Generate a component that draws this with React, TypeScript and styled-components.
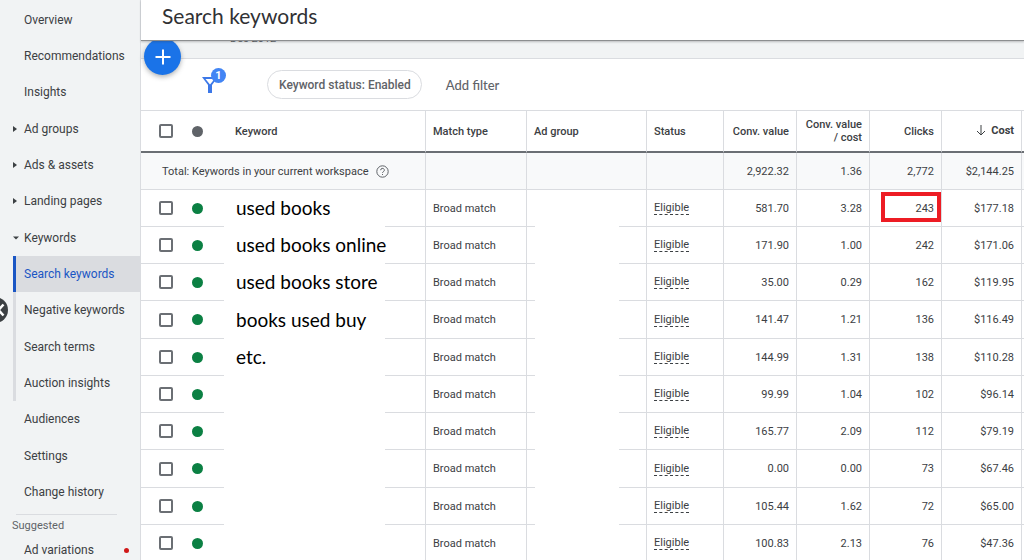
import React from 'react';
import styled, { createGlobalStyle, css } from 'styled-components';

const GlobalStyle = createGlobalStyle`
  * { box-sizing: border-box; }
  body { margin: 0; background: #fff; font-family: Roboto, "Liberation Sans", sans-serif; color: #3c4043; }
  button { font: inherit; color: inherit; border: 0; background: none; padding: 0; cursor: pointer; }
`;

const Shell = styled.div`
  display: flex;
  height: 100vh;
  overflow: hidden;
`;

const Sidebar = styled.nav`
  position: relative;
  flex: 0 0 141px;
  background: #f1f3f4;
  border-right: 1px solid #dadce0;
  padding-top: 2px;
  overflow: hidden;
`;

const NavList = styled.ul`
  list-style: none;
  margin: 0;
  padding: 0;
`;

const NavItem = styled.li`
  height: 36px;
  padding-left: 13px;
  &:nth-child(3n) { height: 37px; }
`;

const NavLink = styled.a<{ $nested?: boolean; $active?: boolean }>`
  display: flex;
  align-items: center;
  height: 100%;
  padding-bottom: 1px;
  font-size: 12px;
  white-space: nowrap;
  color: ${p => (p.$active ? '#1a56c4' : '#3c4043')};
  text-decoration: none;
  border-left: ${p => (p.$nested ? '3px' : '0')} solid ${p => (p.$active ? '#1a56c4' : '#dadce0')};
  padding-left: ${p => (p.$nested ? '8px' : '0')};
  background: ${p => (p.$active ? '#dadce0' : 'transparent')};
`;

const Marker = styled.span`
  display: flex;
  flex: 0 0 11px;
`;

const Suggested = styled.section`
  margin: 4px 0 0 12px;
`;

const SuggestedTitle = styled.h2`
  margin: 0;
  font-size: 11px;
  line-height: 21px;
  font-weight: 400;
  color: #5f6368;
`;

const Divider = styled.hr`
  margin: 0 23px 0 4px;
  border: 0;
  border-top: 1px solid #dadce0;
`;

const SuggestedLink = styled.a`
  display: flex;
  align-items: center;
  justify-content: space-between;
  padding: 0 11px 0 12px;
  height: 28px;
  font-size: 12px;
  color: #3c4043;
  text-decoration: none;
`;

const RedDot = styled.i`
  width: 5px;
  height: 5px;
  border-radius: 50%;
  background: #d01818;
`;

const CollapseButton = styled.button`
  position: absolute;
  left: -18px;
  top: 297px;
  width: 26px;
  height: 26px;
  border-radius: 50%;
  background: #3c4043;
  display: flex;
  align-items: center;
  justify-content: flex-end;
`;

const Main = styled.main`
  position: relative;
  flex: 1;
  min-width: 0;
`;

const Header = styled.header`
  position: relative;
  z-index: 2;
  height: 41px;
  padding: 0 21px;
  background: #fff;
  border-bottom: 1px solid #8c8e90;
  box-shadow: 0 1px 2px rgba(60, 64, 67, 0.3);
`;

const Title = styled.h1`
  margin: 0;
  font-family: Lato, sans-serif;
  font-size: 21px;
  line-height: 32px;
  font-weight: 400;
  color: #303134;
`;

const DateStrip = styled.div`
  display: flex;
  align-items: flex-start;
  height: 18px;
  padding-left: 89px;
  background: #f1f3f4;
  border-bottom: 1px solid #dadce0;
  font-size: 11px;
  line-height: 14px;
  color: #5f6368;
  & > span { margin-top: -9px; }
`;

const AddButton = styled.button`
  position: absolute;
  z-index: 1;
  left: 3px;
  top: 38px;
  width: 37px;
  height: 37px;
  border-radius: 50%;
  background: #1a73e8;
  box-shadow: 0 2px 5px rgba(60, 64, 67, 0.4);
  display: flex;
  align-items: center;
  justify-content: center;
`;

const Toolbar = styled.div`
  display: flex;
  align-items: center;
  height: 51px;
  padding-left: 60px;
`;

const FilterButton = styled.button`
  position: relative;
  width: 18px;
  height: 18px;
  margin-right: 48px;
`;

const Badge = styled.span`
  position: absolute;
  left: 10px;
  top: -8px;
  width: 15px;
  height: 15px;
  border-radius: 50%;
  background: #4285f4;
  color: #fff;
  font-size: 11px;
  font-weight: 700;
  line-height: 15px;
  text-align: center;
`;

const Chip = styled.button`
  height: 29px;
  padding: 0 10px 0 11px;
  border: 1px solid #dadce0;
  border-radius: 15px;
  font-size: 12px;
  font-weight: 500;
  color: #5f6368;
  margin-right: 24px;
`;

const AddFilter = styled.button`
  font-family: Lato, sans-serif;
  font-size: 13px;
  font-weight: 500;
  color: #5f6368;
`;

const Table = styled.table`
  width: 100%;
  table-layout: fixed;
  border-collapse: separate;
  border-spacing: 0;
  border-top: 1px solid #dadce0;
  font-size: 11px;
`;

const cell = css<{ $num?: boolean; $open?: boolean }>`
  padding: 0 7px;
  text-align: ${p => (p.$num ? 'right' : 'left')};
  white-space: nowrap;
  border-right: ${p => (p.$open ? '0' : '1px')} solid #dadce0;
`;

const HeadCell = styled.th<{ $num?: boolean; $open?: boolean; $sorted?: boolean }>`
  ${cell}
  height: 42px;
  line-height: 13px;
  font-weight: ${p => (p.$sorted ? 700 : 500)};
  color: #3c4043;
  border-bottom: 2px solid #6b6f74;
`;

const Cell = styled.td<{ $num?: boolean; $open?: boolean }>`
  ${cell}
  border-bottom: 1px solid #dadce0;
`;

const TotalRow = styled.tr`
  height: 37px;
  background: #f8f9fa;
`;

const Row = styled.tr`
  height: 37px;
  &:nth-child(4n + 1) { height: 38px; }
`;

const CheckCell = styled(Cell)`
  padding: 0 0 0 18px;
`;

const CheckHead = styled(HeadCell)`
  padding: 0 0 0 18px;
`;

const DotHead = styled(HeadCell)`
  padding: 0;
`;

const DotCell = styled(Cell)`
  padding: 0;
`;

const EdgeHead = styled(HeadCell)`
  padding: 0;
`;

const EdgeCell = styled(Cell)`
  padding: 0;
`;

const Checkbox = styled.input`
  appearance: none;
  display: block;
  width: 14px;
  height: 14px;
  margin: 0;
  border: 2px solid #6b6f74;
  border-radius: 2px;
`;

const Dot = styled.span<{ $green?: boolean }>`
  display: block;
  width: 11px;
  height: 11px;
  border-radius: 50%;
  background: ${p => (p.$green ? '#0b8043' : '#5f6368')};
`;

const KeywordHead = styled(HeadCell)`
  padding-left: 11px;
`;

const CoverCell = styled(Cell)<{ $inset?: boolean }>`
  padding: 0 0 0 ${p => (p.$inset ? '8px' : '0')};
  vertical-align: bottom;
`;

const Cover = styled.div<{ $narrow?: boolean }>`
  width: ${p => (p.$narrow ? '84px' : '161px')};
  height: 37px;
  margin-bottom: -1px;
  padding-left: 12px;
  background: #fff;
  font-family: Lato, sans-serif;
  font-size: 19px;
  line-height: 36px;
  color: #000;
`;

const TotalLabel = styled.div`
  display: flex;
  align-items: center;
  gap: 7px;
  padding-left: 14px;
`;

const Status = styled.span`
  display: inline-block;
  line-height: 13px;
  border-bottom: 1px dashed #3c4043;
`;

const SortLabel = styled.span`
  display: inline-flex;
  align-items: center;
  gap: 5px;
`;

const ClicksCell = styled(Cell)`
  position: relative;
`;

const Highlight = styled.span`
  position: absolute;
  left: 11px;
  right: 0;
  top: 2px;
  bottom: 4px;
  border: 4px solid #ed1c24;
`;

type Nav = { label: string; marker?: 'right' | 'down'; nested?: boolean; active?: boolean };

const nav: Nav[] = [
  { label: 'Overview' },
  { label: 'Recommendations' },
  { label: 'Insights' },
  { label: 'Ad groups', marker: 'right' },
  { label: 'Ads & assets', marker: 'right' },
  { label: 'Landing pages', marker: 'right' },
  { label: 'Keywords', marker: 'down' },
  { label: 'Search keywords', nested: true, active: true },
  { label: 'Negative keywords', nested: true },
  { label: 'Search terms', nested: true },
  { label: 'Auction insights', nested: true },
  { label: 'Audiences' },
  { label: 'Settings' },
  { label: 'Change history' },
];

const rows = [
  ['used books', '581.70', '3.28', '243', '$177.18'],
  ['used books online', '171.90', '1.00', '242', '$171.06'],
  ['used books store', '35.00', '0.29', '162', '$119.95'],
  ['books used buy', '141.47', '1.21', '136', '$116.49'],
  ['etc.', '144.99', '1.31', '138', '$110.28'],
  ['', '99.99', '1.04', '102', '$96.14'],
  ['', '165.77', '2.09', '112', '$79.19'],
  ['', '0.00', '0.00', '73', '$67.46'],
  ['', '105.44', '1.62', '72', '$65.00'],
  ['', '100.83', '2.13', '76', '$47.36'],
];

const Col = styled.col<{ $w: number }>`
  width: ${p => p.$w}px;
`;

export default function App() {
  return (
    <Shell>
      <GlobalStyle />
      <Sidebar aria-label="Pages">
        <NavList>
          {nav.map(n => (
            <NavItem key={n.label}>
              <NavLink href="#" $nested={n.nested} $active={n.active}>
                {!n.nested && (
                  <Marker>
                    {n.marker === 'right' && (
                      <svg width="5" height="6" viewBox="0 0 5 6"><path d="M0 0l4 3-4 3z" fill="#3c4043" /></svg>
                    )}
                    {n.marker === 'down' && (
                      <svg width="6" height="6" viewBox="0 0 6 6"><path d="M0 1.500h6L3 4.500z" fill="#3c4043" /></svg>
                    )}
                  </Marker>
                )}
                {n.label}
              </NavLink>
            </NavItem>
          ))}
        </NavList>
        <Suggested>
          <Divider />
          <SuggestedTitle>Suggested</SuggestedTitle>
          <SuggestedLink href="#">Ad variations<RedDot /></SuggestedLink>
        </Suggested>
        <CollapseButton aria-label="Collapse menu">
          <svg width="12" height="16" viewBox="0 0 12 16" fill="none" stroke="#fff" strokeWidth="2.500"><path d="M7.500 2.500L2.500 8l5 5.500" /></svg>
        </CollapseButton>
      </Sidebar>
      <Main>
        <Header><Title>Search keywords</Title></Header>
        <AddButton aria-label="New keyword">
          <svg width="16" height="16" viewBox="0 0 16 16" stroke="#fff" strokeWidth="2"><path d="M8 0.500v15M0.500 8h15" /></svg>
        </AddButton>
        <DateStrip><span>Dec 2012</span></DateStrip>
        <Toolbar>
          <FilterButton aria-label="Filters">
            <svg width="18" height="18" viewBox="0 0 18 18" fill="#3c78e8" fillRule="evenodd">
              <path d="M1 1h16l-6 8v8H7V9zM4.500 3L9 8.500 13.500 3z" />
            </svg>
            <Badge>1</Badge>
          </FilterButton>
          <Chip>Keyword status: Enabled</Chip>
          <AddFilter>Add filter</AddFilter>
        </Toolbar>
        <Table>
          <colgroup>
            <Col $w={51} />
            <Col $w={32} />
            <col />
            <Col $w={101} />
            <Col $w={120} />
            <Col $w={77} />
            <Col $w={73} />
            <Col $w={73} />
            <Col $w={72} />
            <Col $w={80} />
            <Col $w={2} />
          </colgroup>
          <thead>
            <tr>
              <CheckHead $open><Checkbox type="checkbox" aria-label="Select all keywords" /></CheckHead>
              <DotHead $open><Dot /></DotHead>
              <KeywordHead>Keyword</KeywordHead>
              <HeadCell>Match type</HeadCell>
              <HeadCell>Ad group</HeadCell>
              <HeadCell>Status</HeadCell>
              <HeadCell $num>Conv. value</HeadCell>
              <HeadCell $num>Conv. value<br />/ cost</HeadCell>
              <HeadCell $num>Clicks</HeadCell>
              <HeadCell $num $sorted>
                <SortLabel>
                  <svg width="10" height="11" viewBox="0 0 10 11" fill="none" stroke="#3c4043"><path d="M5 0v10M1 6l4 4 4-4" /></svg>
                  Cost
                </SortLabel>
              </HeadCell>
              <EdgeHead $open />
            </tr>
          </thead>
          <tbody>
            <TotalRow>
              <Cell colSpan={3}>
                <TotalLabel>
                  Total: Keywords in your current workspace
                  <svg width="13" height="13" viewBox="0 0 13 13" fill="none" stroke="#5f6368">
                    <circle cx="6.500" cy="6.500" r="5.700" />
                    <path d="M4.700 5.200a1.800 1.800 0 1 1 2.700 1.500c-.6.4-.9.700-.9 1.300M6.500 9v1" />
                  </svg>
                </TotalLabel>
              </Cell>
              <Cell /><Cell /><Cell />
              <Cell $num>2,922.32</Cell>
              <Cell $num>1.36</Cell>
              <Cell $num>2,772</Cell>
              <Cell $num>$2,144.25</Cell>
              <EdgeCell $open />
            </TotalRow>
            {rows.map(([keyword, value, ratio, clicks, cost], i) => (
              <Row key={i}>
                <CheckCell $open><Checkbox type="checkbox" aria-label={`Select row ${i + 1}`} /></CheckCell>
                <DotCell $open><Dot $green /></DotCell>
                <CoverCell><Cover>{keyword}</Cover></CoverCell>
                <Cell>Broad match</Cell>
                <CoverCell $inset><Cover $narrow /></CoverCell>
                <Cell><Status>Eligible</Status></Cell>
                <Cell $num>{value}</Cell>
                <Cell $num>{ratio}</Cell>
                <ClicksCell $num>{clicks}{i === 0 && <Highlight />}</ClicksCell>
                <Cell $num>{cost}</Cell>
                <EdgeCell $open />
              </Row>
            ))}
          </tbody>
        </Table>
      </Main>
    </Shell>
  );
}
